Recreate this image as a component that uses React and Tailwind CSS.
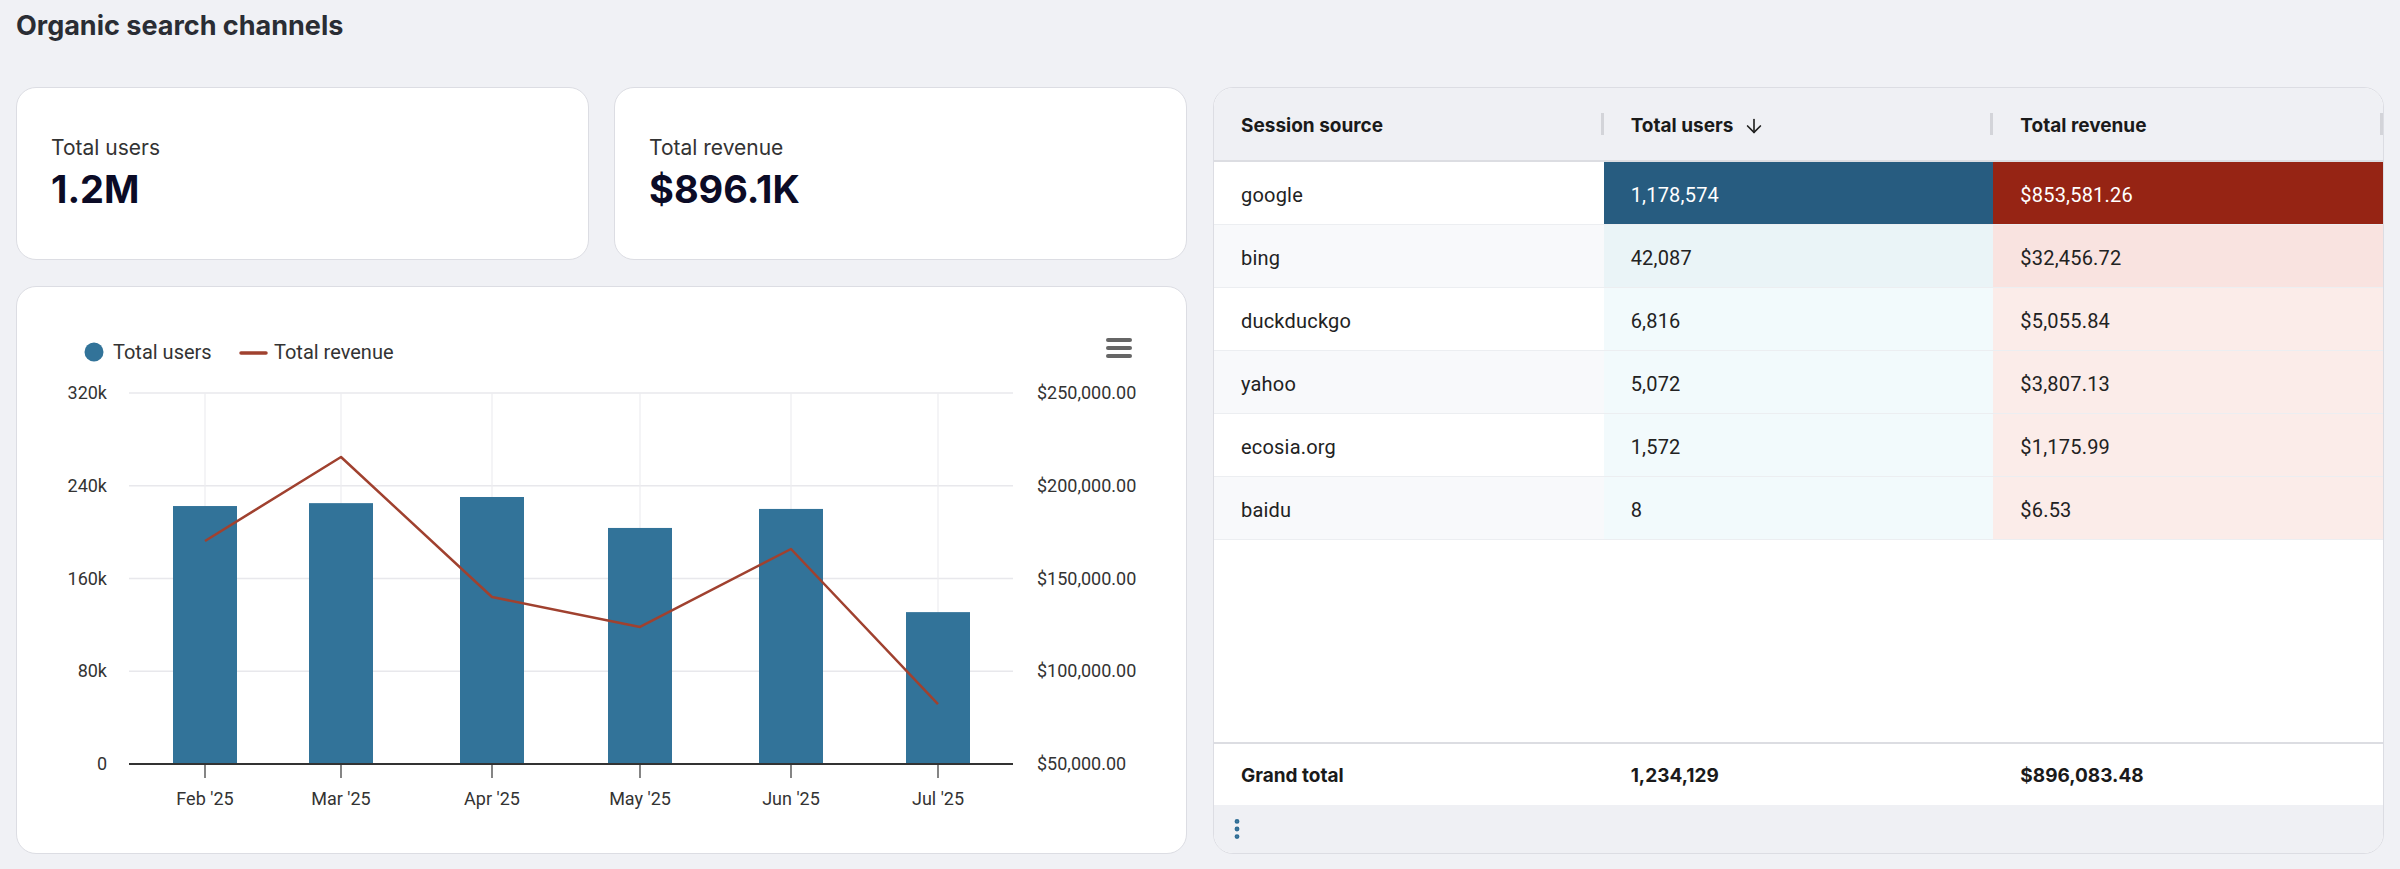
import React from "react";
import { ArrowDown, EllipsisVertical } from "lucide-react";

const months = [
  { label: "Feb '25", x: 188, users: 222500, revenue: 170200 },
  { label: "Mar '25", x: 324, users: 225000, revenue: 215500 },
  { label: "Apr '25", x: 475, users: 230300, revenue: 140000 },
  { label: "May '25", x: 623, users: 203600, revenue: 123900 },
  { label: "Jun '25", x: 774, users: 220000, revenue: 165900 },
  { label: "Jul '25", x: 921, users: 131000, revenue: 82300 },
];

const BASE = 477;
const STEP = 92.75;
const yUsers = (v) => BASE - (v / 80000) * STEP;
const yRev = (v) => BASE - ((v - 50000) / 50000) * STEP;

const leftTicks = ["0", "80k", "160k", "240k", "320k"];
const rightTicks = ["$50,000.00", "$100,000.00", "$150,000.00", "$200,000.00", "$250,000.00"];

const rows = [
  { source: "google", users: "1,178,574", revenue: "$853,581.26", u: "bg-[#275c80] text-white", r: "bg-[#962414] text-white" },
  { source: "bing", users: "42,087", revenue: "$32,456.72", u: "bg-[#eaf4f7]", r: "bg-[#f9e3e0]" },
  { source: "duckduckgo", users: "6,816", revenue: "$5,055.84", u: "bg-[#f2fafc]", r: "bg-[#fbece9]" },
  { source: "yahoo", users: "5,072", revenue: "$3,807.13", u: "bg-[#f2fafc]", r: "bg-[#fbece9]" },
  { source: "ecosia.org", users: "1,572", revenue: "$1,175.99", u: "bg-[#f2fafc]", r: "bg-[#fbece9]" },
  { source: "baidu", users: "8", revenue: "$6.53", u: "bg-[#f2fafc]", r: "bg-[#fbece9]" },
];

const KpiCard = ({ label, value }) => (
  <div className="bg-white border border-[#dcdde3] rounded-[20px] flex flex-col justify-center pl-[34px]">
    <div className="text-[21px] leading-[26px] text-[#333] font-['Inter',sans-serif]">{label}</div>
    <div className="text-[38px] leading-[46px] font-bold text-[#0b0b26] font-['Inter',sans-serif] mt-[5px]">
      {value}
    </div>
  </div>
);

const Chart = () => {
  const line = months.map((m) => `${m.x},${yRev(m.revenue).toFixed(1)}`).join(" ");
  return (
    <svg width="1171" height="566" viewBox="0 0 1171 566" className="block font-['Roboto',sans-serif]">
      {/* legend */}
      <circle cx="77" cy="65" r="9.5" fill="#327399" />
      <text x="96" y="72" fontSize="20" fill="#333">Total users</text>
      <line x1="224" y1="66" x2="249" y2="66" stroke="#a0412f" strokeWidth="3.5" strokeLinecap="round" />
      <text x="257" y="72" fontSize="20" fill="#333">Total revenue</text>

      {/* menu */}
      <rect x="1089" y="51" width="26" height="4" rx="2" fill="#666" />
      <rect x="1089" y="59" width="26" height="4" rx="2" fill="#666" />
      <rect x="1089" y="67" width="26" height="4" rx="2" fill="#666" />

      {/* horizontal grid */}
      {leftTicks.map((t, i) => {
        const y = BASE - i * STEP;
        return (
          <g key={t}>
            {i > 0 && <line x1="112" y1={y} x2="996" y2={y} stroke="#e8e8ec" strokeWidth="1.5" />}
            <text x="90" y={y + 6} fontSize="18" fill="#333" textAnchor="end">{t}</text>
            <text x="1020" y={y + 6} fontSize="18" fill="#333">{rightTicks[i]}</text>
          </g>
        );
      })}

      {/* vertical grid */}
      {months.map((m) => (
        <line key={m.label} x1={m.x} y1={BASE - 4 * STEP} x2={m.x} y2={BASE} stroke="#ededf0" strokeWidth="1.2" />
      ))}

      {/* bars */}
      {months.map((m) => (
        <rect key={m.label} x={m.x - 32} y={yUsers(m.users)} width="64" height={BASE - yUsers(m.users)} fill="#327399" />
      ))}

      {/* axis */}
      <line x1="112" y1={BASE} x2="996" y2={BASE} stroke="#333" strokeWidth="2" />
      {months.map((m) => (
        <g key={m.label}>
          <line x1={m.x} y1={BASE} x2={m.x} y2={BASE + 14} stroke="#333" strokeWidth="1.2" />
          <text x={m.x} y={BASE + 41} fontSize="18" fill="#333" textAnchor="middle">{m.label}</text>
        </g>
      ))}

      {/* revenue line */}
      <polyline points={line} fill="none" stroke="#a0412f" strokeWidth="2.5" strokeLinejoin="round" />
    </svg>
  );
};

const HeaderCell = ({ children }) => (
  <div className="relative flex items-center pl-[27px] pt-[4px] text-[19px] font-bold text-[#1a1a1a] font-['Inter',sans-serif]">
    {children}
    <span className="absolute right-0 top-[25px] w-[3px] h-[22px] bg-[#d3d4d9]" />
  </div>
);

const App = () => {
  return (
    <div className="w-full h-[869px] bg-[#f0f1f5] px-4 pt-[9px] overflow-hidden">
      <h1 className="text-[27px] leading-[33px] font-bold text-[#2a2d34] font-['Inter',sans-serif]">
        Organic search channels
      </h1>

      <div className="mt-[45px] grid grid-cols-2 gap-[26px] h-[767px]">
        <div className="flex flex-col gap-[26px]">
          <div className="grid grid-cols-2 gap-[25px] h-[173px]">
            <KpiCard label="Total users" value="1.2M" />
            <KpiCard label="Total revenue" value="$896.1K" />
          </div>
          <div className="bg-white border border-[#dcdde3] rounded-[20px] h-[568px] overflow-hidden">
            <Chart />
          </div>
        </div>

        <div className="bg-white border border-[#dcdde3] rounded-[20px] overflow-hidden flex flex-col">
          <div className="grid grid-cols-3 h-[74px] shrink-0 bg-[#eff0f4] border-b-2 border-[#dcdde2]">
            <HeaderCell>Session source</HeaderCell>
            <HeaderCell>
              Total users
              <ArrowDown className="ml-[10px] text-[#222]" size={22} strokeWidth={1.8} />
            </HeaderCell>
            <HeaderCell>Total revenue</HeaderCell>
          </div>

          {rows.map((row, i) => (
            <div
              key={row.source}
              className="grid grid-cols-3 h-[63px] shrink-0 border-b border-[#eceef1] text-[20px] text-[#222] font-['Roboto',sans-serif] tracking-[0.2px]"
            >
              <div className={`flex items-center pl-[27px] pt-[3px] ${i % 2 === 1 ? "bg-[#f8f9fb]" : "bg-white"}`}>
                {row.source}
              </div>
              <div className={`flex items-center pl-[27px] pt-[3px] ${row.u}`}>{row.users}</div>
              <div className={`flex items-center pl-[27px] pt-[3px] ${row.r}`}>{row.revenue}</div>
            </div>
          ))}

          <div className="flex-1" />

          <div className="grid grid-cols-3 h-[63px] shrink-0 border-t-2 border-[#dcdde2] text-[19px] font-bold text-[#1a1a1a] font-['Inter',sans-serif]">
            <div className="flex items-center pl-[27px] pt-[3px]">Grand total</div>
            <div className="flex items-center pl-[27px] pt-[3px]">1,234,129</div>
            <div className="flex items-center pl-[27px] pt-[3px]">$896,083.48</div>
          </div>

          <div className="h-[48px] shrink-0 bg-[#eff0f4] flex items-center pl-[10px]">
            <EllipsisVertical size={26} strokeWidth={2.5} className="text-[#2f6d95]" />
          </div>
        </div>
      </div>
    </div>
  );
};

export default App;
